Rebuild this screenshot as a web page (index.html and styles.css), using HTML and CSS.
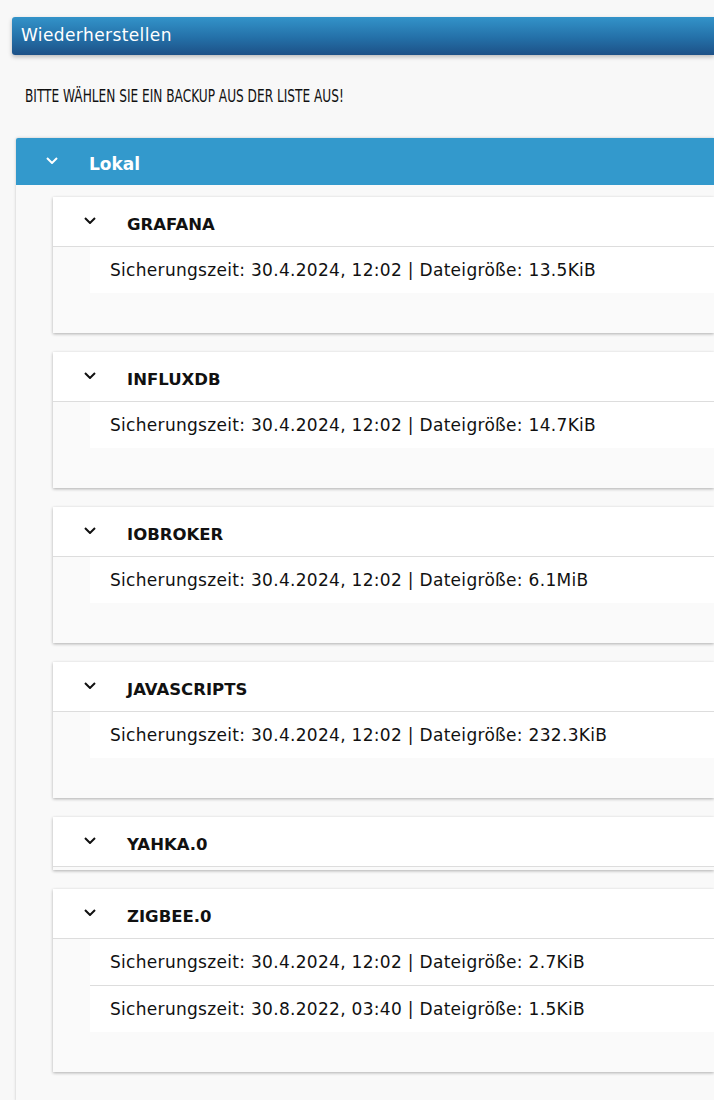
FILE: index.html
```html
<!DOCTYPE html>
<html lang="de">
<head>
<meta charset="utf-8">
<title>Wiederherstellen</title>
<link rel="stylesheet" href="styles.css">
</head>
<body>
<div class="titlebar">Wiederherstellen</div>
<p class="intro"><span class="intro-text">BITTE WÄHLEN SIE EIN BACKUP AUS DER LISTE AUS!</span></p>

<section class="panel">
  <div class="panel-head">
    <svg class="chev chev-white" viewBox="0 0 12 7"><polyline points="1,1 6,6 11,1"/></svg>
    <span class="panel-title">Lokal</span>
  </div>
  <div class="panel-body">

    <div class="card">
      <div class="card-head">
        <svg class="chev" viewBox="0 0 12 7"><polyline points="1,1 6,6 11,1"/></svg>
        <span class="card-title">GRAFANA</span>
      </div>
      <div class="card-body">
        <div class="row">Sicherungszeit: 30.4.2024, 12:02 | Dateigröße: 13.5KiB</div>
      </div>
    </div>

    <div class="card">
      <div class="card-head">
        <svg class="chev" viewBox="0 0 12 7"><polyline points="1,1 6,6 11,1"/></svg>
        <span class="card-title">INFLUXDB</span>
      </div>
      <div class="card-body">
        <div class="row">Sicherungszeit: 30.4.2024, 12:02 | Dateigröße: 14.7KiB</div>
      </div>
    </div>

    <div class="card">
      <div class="card-head">
        <svg class="chev" viewBox="0 0 12 7"><polyline points="1,1 6,6 11,1"/></svg>
        <span class="card-title">IOBROKER</span>
      </div>
      <div class="card-body">
        <div class="row">Sicherungszeit: 30.4.2024, 12:02 | Dateigröße: 6.1MiB</div>
      </div>
    </div>

    <div class="card">
      <div class="card-head">
        <svg class="chev" viewBox="0 0 12 7"><polyline points="1,1 6,6 11,1"/></svg>
        <span class="card-title">JAVASCRIPTS</span>
      </div>
      <div class="card-body">
        <div class="row">Sicherungszeit: 30.4.2024, 12:02 | Dateigröße: 232.3KiB</div>
      </div>
    </div>

    <div class="card">
      <div class="card-head">
        <svg class="chev" viewBox="0 0 12 7"><polyline points="1,1 6,6 11,1"/></svg>
        <span class="card-title">YAHKA.0</span>
      </div>
      <div class="card-body empty"></div>
    </div>

    <div class="card">
      <div class="card-head">
        <svg class="chev" viewBox="0 0 12 7"><polyline points="1,1 6,6 11,1"/></svg>
        <span class="card-title">ZIGBEE.0</span>
      </div>
      <div class="card-body">
        <div class="row">Sicherungszeit: 30.4.2024, 12:02 | Dateigröße: 2.7KiB</div>
        <div class="row">Sicherungszeit: 30.8.2022, 03:40 | Dateigröße: 1.5KiB</div>
      </div>
    </div>

  </div>
</section>
</body>
</html>
```

FILE: styles.css
```css
html, body {
  margin: 0;
  padding: 0;
}
body {
  background: #f8f8f8;
  font-family: "DejaVu Sans", "Liberation Sans", sans-serif;
  color: #111;
  overflow-x: hidden;
}
.titlebar {
  margin: 17px 0 0 12px;
  height: 38px;
  line-height: 37px;
  padding-left: 9px;
  color: #fff;
  font-size: 17px;
  letter-spacing: 0.4px;
  border-radius: 3px 0 0 3px;
  background: linear-gradient(to bottom, #3393c9 0%, #2470a8 55%, #1d5187 100%);
  box-shadow: 0 2px 4px rgba(0,0,0,0.25);
}
.intro {
  margin: 30px 0 0 25px;
  font-family: "DejaVu Sans", sans-serif;
  font-stretch: condensed;
  font-size: 17.5px;
  line-height: 22px;
  color: #111;
  white-space: nowrap;
}
.intro-text {
  display: inline-block;
  transform: scaleX(0.772);
  transform-origin: left center;
}
.panel {
  margin: 31px 0 0 16px;
  box-shadow: 0 0 3px rgba(0,0,0,0.22);
  background: #f9f9f9;
  border-radius: 2px 0 0 0;
}
.panel-head {
  height: 47px;
  background: #3399cc;
  display: flex;
  align-items: center;
  border-radius: 2px 0 0 0;
}
.chev {
  width: 12px;
  height: 7px;
  fill: none;
  stroke: #111;
  stroke-width: 2;
  flex: none;
}
.chev-white {
  stroke: #fff;
  margin-left: 30px;
  margin-top: -2px;
}
.panel-title {
  margin-left: 31px;
  padding-top: 5px;
  color: #fff;
  font-weight: bold;
  font-size: 17px;
}
.panel-body {
  padding: 12px 0 10px 37px;
}
.card {
  background: #fafafa;
  box-shadow: 0 1px 3px rgba(0,0,0,0.3);
  margin-bottom: 19px;
}
.card-head {
  height: 49px;
  background: #fff;
  border-bottom: 1px solid #dddddd;
  display: flex;
  align-items: center;
}
.card-head .chev {
  margin-left: 31px;
  margin-top: -2px;
}
.card-title {
  margin-left: 31px;
  padding-top: 5px;
  font-weight: bold;
  font-size: 16.5px;
  color: #111;
}
.card-body {
  padding: 0 0 40px 37px;
}
.card-body.empty {
  padding: 0;
  height: 3px;
}
.row {
  background: #fff;
  height: 46px;
  line-height: 46px;
  padding-left: 20px;
  font-size: 17px;
  letter-spacing: 0.3px;
  white-space: nowrap;
  border-bottom: 1px solid #dddddd;
}
.row:last-child {
  border-bottom: none;
}
```
